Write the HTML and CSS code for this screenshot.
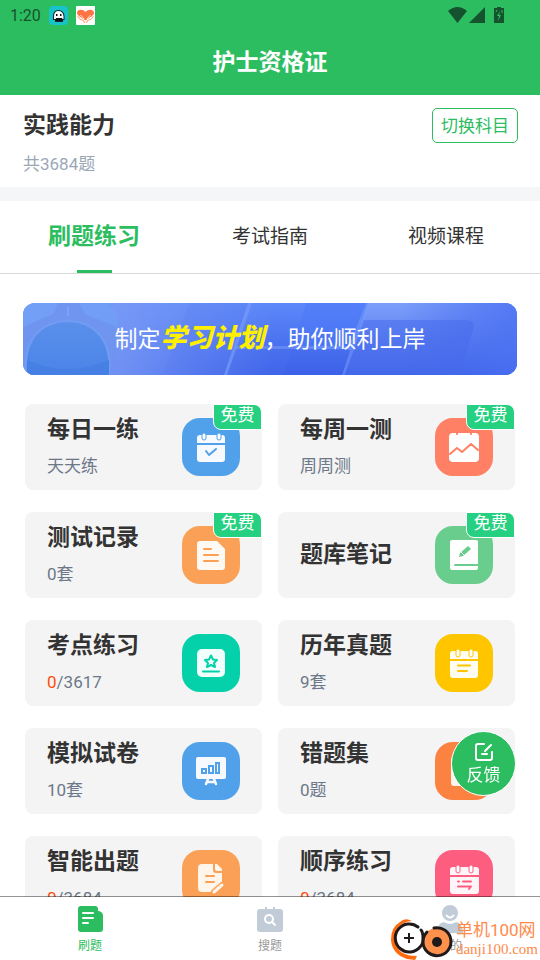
FILE: index.html
```html
<!DOCTYPE html>
<html lang="zh-CN">
<head>
<meta charset="utf-8">
<meta name="viewport" content="width=device-width, initial-scale=1">
<title>护士资格证</title>
<link rel="stylesheet" href="styles.css">
</head>
<body>
<header class="top">
  <div class="status">
    <span>1:20</span>
    <svg class="app" viewBox="0 0 19 19" aria-hidden="true"><rect width="19" height="19" rx="4" fill="#15c3c8"/><path d="M4 14V10.500Q4 4 9.500 4T15.500 10.500V14H14V16H6V14Z" fill="#0d2a2d"/><path d="M5 13V10.500Q5 5 9.500 5T14.500 10.500V13Z" fill="#fff"/><path d="M7 12h6l1 3H6zM7 8h1.500v2H7zM11 8h1.500v2H11z" fill="#111"/></svg>
    <svg class="app heart" viewBox="0 0 19 19" aria-hidden="true"><rect width="19" height="19" rx="1" fill="#fff"/><path d="M9.500 14.500C5 11 1 9.500 1 7C1 3 7 3 9.500 6C12 3 18 3 18 7C18 9.500 14 11 9.500 14.500Z" fill="#ff7444"/><path d="M1.500 10Q3 14 7.500 14.500L8.500 17M17.500 10Q16 14 11.500 14.500L10.500 17" fill="none" stroke="#ff9a62"/><path d="M4.500 9L8 13M14.500 9L11 13" fill="none" stroke="#ffe0c8"/></svg>
    <svg class="signals" viewBox="0 0 58 19" aria-hidden="true"><g fill="#14532d"><path d="M0 5Q9.500-3 19 5L9.500 17Z"/><path d="M37 1V17H21Z"/><path d="M49 1h4v1h3v15H46V2h3z"/></g><path d="M52 5l-3 5h2l-1 5 3-6h-2z" fill="#2dbd61"/><path d="M48 6l1-2M54 4v3" stroke="#2dbd61"/></svg>
  </div>
  <h1>护士资格证</h1>
</header>
<main>
  <section class="subject">
    <div><h2>实践能力</h2><p>共3684题</p></div>
    <button class="switch" type="button">切换科目</button>
  </section>
  <div class="tabs">
    <button class="tab active" type="button">刷题练习</button>
    <button class="tab" type="button">考试指南</button>
    <button class="tab" type="button">视频课程</button>
  </div>
  <a class="banner" href="#plan">
    <svg class="art" viewBox="0 0 494 72" preserveAspectRatio="none" aria-hidden="true">
      <defs>
        <linearGradient id="base" x1="0" y1="0" x2="0" y2="1"><stop offset="0" stop-color="#5d88f9"/><stop offset="1" stop-color="#3c60e8"/></linearGradient>
        <linearGradient id="left" x1="0" y1="0" x2="1" y2="0"><stop offset="0" stop-color="#7b9cf6"/><stop offset=".4" stop-color="#7b9cf6" stop-opacity=".8"/><stop offset="1" stop-color="#7b9cf6" stop-opacity="0"/></linearGradient>
        <linearGradient id="lens" x1="0" y1="0" x2="0" y2="1"><stop offset="0" stop-color="#5a90eb"/><stop offset="1" stop-color="#4b84e8"/></linearGradient>
        <linearGradient id="pane" x1="0" y1="0" x2="0" y2="1"><stop offset="0" stop-color="#7c9ffb"/><stop offset="1" stop-color="#4266e9"/></linearGradient>
        <linearGradient id="edge" x1="0" y1="0" x2="1" y2="0"><stop offset="0" stop-color="#3c60e8" stop-opacity="0"/><stop offset="1" stop-color="#4a70f3" stop-opacity=".8"/></linearGradient>
      </defs>
      <rect width="494" height="72" fill="url(#base)"/>
      <rect width="250" height="72" fill="url(#left)"/>
      <path d="M0 0H80Q96 4 95 22L86 72H0Z" fill="#6fa2f7" opacity=".6"/>
      <path d="M0 24L30 11 35 0H56L62 11 94 24V44L88 72H0Z" fill="#6f91ee" opacity=".7"/>
      <path d="M3 72Q0 32 28 21Q44 15 62 21Q90 34 86 72Z" fill="url(#lens)" stroke="#719cf3" stroke-width="2"/>
      <path d="M4 57Q44 75 86 57V72H4Z" fill="#4680e5"/>
      <path d="M45 4V13" stroke="#8baefb"/>
      <path d="M166 0H226L210 47H270L260 72H140Z" fill="#557af0" opacity=".2"/>
      <path d="M225 0H229L212 49 204 72H201Z" fill="#769bfb" opacity=".7"/>
      <path d="M283 0H345L327 47H270Z" fill="#4a78fa" opacity=".5"/>
      <path d="M345 0H494V72H323Z" fill="url(#pane)"/>
      <rect x="380" width="114" height="72" fill="url(#edge)"/>
      <path d="M340 17H443Q454 17 449 30L436 72H323Z" fill="#4569eb" opacity=".5"/>
      <path d="M343 0H347L322 72H319L327 48Q326 46 320 46H212V43H326Z" fill="#7ca0fb" opacity=".5"/>
    </svg>
    <span class="slogan">制定<em>学习计划</em>，助你顺利上岸</span>
  </a>
  <div class="grid">
    <a class="card" href="#daily"><div><h3>每日一练</h3><p>天天练</p></div><span class="badge">免费</span>
      <svg class="tile blue" viewBox="0 0 58 58" aria-hidden="true"><path d="M15 25V20Q15 17 18 17H40Q43 17 43 20V25ZM15 27H43V41Q43 44 40 44H18Q15 44 15 41Z" fill="#f6faff"/><g class="ring"><rect x="20" y="15" width="4" height="7" rx="2"/><rect x="35" y="15" width="4" height="7" rx="2"/></g><path class="cut" d="M24 33L27 37 34 31"/></svg></a>
    <a class="card" href="#weekly"><div><h3>每周一测</h3><p>周周测</p></div><span class="badge">免费</span>
      <svg class="tile coral" viewBox="0 0 58 58" aria-hidden="true"><rect x="14" y="15" width="30" height="29" rx="4" fill="#fff"/><path class="cut" d="M22 14V16M36 14V16M15 36L22 30 27 34 36 26 43 32"/></svg></a>
    <a class="card" href="#records"><div><h3>测试记录</h3><p>0套</p></div><span class="badge">免费</span>
      <svg class="tile orange" viewBox="0 0 58 58" aria-hidden="true"><path d="M18 15H35L43 23V41Q43 44 40 44H18Q15 44 15 41V18Q15 15 18 15Z" fill="#fff9f3"/><path class="cut" d="M22 23H29M22 29H36M22 35H36"/></svg></a>
    <a class="card" href="#notes"><div><h3>题库笔记</h3></div><span class="badge">免费</span>
      <svg class="tile green" viewBox="0 0 58 58" aria-hidden="true"><rect x="15" y="14" width="28" height="30" rx="2" fill="#fff"/><path class="cut" d="M20 39H44"/><path class="fill" d="M24 31L25 27 33 20 36 23 28 30Z"/><path d="M26 26L29 29" stroke="#fff"/></svg></a>
    <a class="card" href="#points"><div><h3>考点练习</h3><p><b>0</b>/3617</p></div>
      <svg class="tile teal" viewBox="0 0 58 58" aria-hidden="true"><rect x="15" y="15" width="28" height="28" rx="5" fill="#f0fffb"/><path class="cut" d="M29 21.500L31 25.500 35 26 32 29 33 33 29 31 25 33 26 29 23 26 27 25.500ZM21 37.500H37"/></svg></a>
    <a class="card" href="#past"><div><h3>历年真题</h3><p>9套</p></div>
      <svg class="tile yellow" viewBox="0 0 58 58" aria-hidden="true"><path d="M15 25V20Q15 17 18 17H40Q43 17 43 20V25ZM15 27H43V41Q43 44 40 44H18Q15 44 15 41Z" fill="#fffdf0"/><g class="ring"><rect x="21" y="15" width="4" height="8" rx="2"/><rect x="34" y="15" width="4" height="8" rx="2"/></g><path class="cut" d="M23 31.500H35M23 37H32"/></svg></a>
    <a class="card" href="#mock"><div><h3>模拟试卷</h3><p>10套</p></div>
      <svg class="tile blue" viewBox="0 0 58 58" aria-hidden="true"><rect x="14" y="15" width="30" height="22" rx="2" fill="#f6faff"/><path d="M26 37L24 42M32 37L34 42M25 40H33" fill="none" stroke="#f6faff" stroke-width="2.500" stroke-linecap="round"/><path class="cut thin" d="M20 27H24V31H20ZM27 24H31V31H27ZM34 21H37V31H34Z"/></svg></a>
    <a class="card" href="#wrong"><div><h3>错题集</h3><p>0题</p></div>
      <svg class="tile deep" viewBox="0 0 58 58" aria-hidden="true"><rect x="16" y="15" width="27" height="29" rx="3" fill="#fff4ed"/><path class="cut" d="M24 25L33 34M33 25L24 34"/></svg></a>
    <a class="card" href="#smart"><div><h3>智能出题</h3><p><b>0</b>/3684</p></div>
      <svg class="tile orange" viewBox="0 0 58 58" aria-hidden="true"><path d="M20 14H31V20Q31 23 34 23H40V34L31 42H20Q16 42 16 38V18Q16 14 20 14ZM33 14H35L40 19V21H35Q33 21 33 19Z" fill="#fff5eb"/><path class="cut" d="M24 26H32M24 32H32"/><path d="M32 42L40 35" stroke="#fba157" stroke-width="6" stroke-linecap="round"/><path d="M32 42L40 35" stroke="#fff5eb" stroke-width="3" stroke-linecap="round"/></svg></a>
    <a class="card" href="#sequence"><div><h3>顺序练习</h3><p><b>0</b>/3684</p></div>
      <svg class="tile pink" viewBox="0 0 58 58" aria-hidden="true"><path d="M15 25V20Q15 17 18 17H41Q44 17 44 20V25ZM15 27H44V41Q44 44 41 44H18Q15 44 15 41Z" fill="#fff5f8"/><g class="ring"><rect x="21" y="15" width="4" height="8" rx="2"/><rect x="34" y="15" width="4" height="8" rx="2"/></g><path class="cut" d="M23 31.500H24M28 31.500H36M23 36.500H36L34 39"/></svg></a>
  </div>
</main>
<button class="feedback" type="button">
  <svg viewBox="0 0 20 20" aria-hidden="true"><path d="M10 2H4Q2 2 2 4V16Q2 18 4 18H16Q18 18 18 16V10M17 3L11 9M8 12H13" fill="none" stroke="#fff" stroke-width="2" stroke-linecap="round"/></svg>
  反馈
</button>
<nav>
  <a class="on" href="#practice"><svg viewBox="0 0 26 28" aria-hidden="true"><path d="M4 1H18Q21 1 21 4V6H22Q26 7 26 11V24Q26 27 23 27H4Q1 27 1 24V4Q1 1 4 1Z" fill="#2dbd61"/><path d="M6 8H16M6 13H16M6 18H11" stroke="#fff" stroke-width="2" stroke-linecap="round"/></svg>刷题</a>
  <a href="#search"><svg viewBox="0 0 26 28" aria-hidden="true"><path d="M3 4H8V2H10V4H16V2H18V4H23Q26 4 26 7V24Q26 27 23 27H3Q0 27 0 24V7Q0 4 3 4Z" fill="#c2cbd8"/><circle cx="12" cy="14" r="4" fill="none" stroke="#fff" stroke-width="2"/><path d="M15 17L18 20" stroke="#fff" stroke-width="2" stroke-linecap="round"/></svg>搜题</a>
  <a href="#mine"><svg viewBox="0 0 26 28" aria-hidden="true"><circle cx="13" cy="8" r="8" fill="#c2cbd8"/><path d="M9 10Q13 15 17 10" fill="none" stroke="#fff" stroke-width="2"/><path d="M0 28Q0 18 7 17Q13 21 19 17Q26 18 26 28Z" fill="#c2cbd8"/></svg>我的</a>
  <div class="mark">
    <svg viewBox="0 0 64 42" aria-hidden="true"><path d="M22 3Q15-1 10 4Q1 9 1 22Q2 36 17 41L25 42 27 38Q8 38 5 24Q4 10 12 6Q17 3 22 3Z" fill="#ff6a0c"/><circle cx="19" cy="20" r="14" fill="#fff"/><path d="M28 9A14 14 0 1 0 30 29Q34 25 33 20Q33 14 31 12" fill="none" stroke="#211a1a" stroke-width="3" stroke-linecap="round"/><path d="M19 15V25M14 20H24" stroke="#211a1a" stroke-width="2"/><circle cx="47" cy="24" r="14" fill="#ff914d"/><path d="M44 10A14 14 0 1 1 33 24Q33 18 37 14" fill="none" stroke="#211a1a" stroke-width="3" stroke-linecap="round"/><circle cx="47" cy="24" r="5" fill="#211a1a"/></svg>
    <p>单机100网<small>danji100.com</small></p>
  </div>
</nav>
</body>
</html>
```
FILE: styles.css
```css
* { box-sizing: border-box; }

body {
  margin: 0;
  height: 100vh;
  display: flex;
  flex-direction: column;
  background: #fff;
  color: #333;
  font-family: Roboto, "Noto Sans CJK SC", sans-serif;
  font-size: 17px;
  line-height: 24px;
}

h1, h2, h3, p { margin: 0; }
h1, h2, h3 { font-size: 23px; line-height: 34px; font-weight: 700; }
a { color: inherit; text-decoration: none; }
button { font: inherit; border: 0; padding: 0; background: none; color: inherit; }
svg { display: block; }

.top { background: #2dbd61; padding-bottom: 15px; flex: none; }
.top h1 { color: #fff; text-align: center; }
.status {
  display: flex;
  align-items: center;
  gap: 8px;
  height: 46px;
  padding: 0 34px 15px 10px;
  font-size: 16px;
  color: #14532d;
}
.app { width: 19px; height: 19px; }
.signals { width: 58px; height: 19px; margin-left: auto; }

main { flex: 1; min-height: 0; overflow-y: auto; scrollbar-width: none; }

.subject {
  display: flex;
  justify-content: space-between;
  align-items: flex-start;
  padding: 13px 22px 11px 23px;
  border-bottom: 14px solid #f5f6f8;
}
.subject h2 { line-height: 36px; }
.subject p { margin-top: 8px; color: #9ba7b7; }
.switch {
  height: 35px;
  padding: 0 8px;
  border: 1px solid #2dbd61;
  border-radius: 5px;
  color: #2dbd61;
}

.tabs { display: flex; height: 73px; padding: 0 6px; border-bottom: 1px solid #d8d8d8; }
.tab {
  flex: 1;
  display: flex;
  flex-direction: column;
  align-items: center;
  padding-top: 19px;
  font-size: 19px;
  line-height: 34px;
}
.tab.active { color: #2dbd61; font-size: 23px; font-weight: 700; }
.tab.active::after { content: ""; width: 35px; height: 3px; margin-top: auto; background: #2dbd61; }

.banner {
  position: relative;
  display: flex;
  align-items: center;
  justify-content: center;
  height: 72px;
  margin: 29px 23px;
  border-radius: 12px;
  overflow: hidden;
}
.art { position: absolute; inset: 0; width: 100%; height: 100%; }
.slogan { position: relative; color: #fff; font-size: 23px; line-height: 34px; white-space: nowrap; }
.slogan em { color: #fff000; font-size: 26px; font-weight: 900; }

.grid {
  display: grid;
  grid-template-columns: 1fr 1fr;
  gap: 22px 16px;
  padding: 0 25px 22px;
}
.card {
  position: relative;
  display: flex;
  align-items: center;
  justify-content: space-between;
  height: 86px;
  padding: 0 22px;
  border-radius: 8px;
  background: #f4f4f4;
}
.card p { margin-top: 7px; padding-bottom: 3px; color: #6c7889; }
.card b { color: #ff4d0a; font-weight: 400; }
.badge {
  position: absolute;
  top: 0;
  right: 0;
  width: 49px;
  height: 26px;
  border: 1px solid #fff;
  border-radius: 0 8px 0 8px;
  background: #25d080;
  color: #fff;
  text-align: center;
  line-height: 21px;
}

.tile { width: 58px; height: 58px; border-radius: 18px; background: currentColor; }
.cut { fill: none; stroke: currentColor; stroke-width: 2; stroke-linecap: round; stroke-linejoin: round; }
.thin { stroke-linejoin: miter; }
.fill { fill: currentColor; }
.ring { fill: #fff; stroke: currentColor; stroke-width: 1; }
.blue { color: #50a1ea; }
.coral { color: #ff8064; }
.orange { color: #fba157; }
.green { color: #69ce8d; }
.teal { color: #04d1aa; }
.yellow { color: #ffc600; }
.deep { color: #fb8241; }
.pink { color: #fd5e80; }

.feedback {
  position: fixed;
  right: 24px;
  bottom: 164px;
  width: 65px;
  height: 65px;
  display: flex;
  flex-direction: column;
  align-items: center;
  justify-content: center;
  gap: 1px;
  padding-top: 2px;
  border: 1px solid #fff;
  border-radius: 50%;
  background: #2dbd61;
  color: #fff;
}
.feedback svg { width: 20px; height: 20px; }

nav {
  position: relative;
  flex: none;
  display: flex;
  height: 63px;
  background: #fff;
  box-shadow: 0 -1px 0 rgba(0, 0, 0, 0.42);
}
nav a {
  flex: 1;
  display: flex;
  flex-direction: column;
  align-items: center;
  gap: 1px;
  padding-top: 8px;
  color: #999;
  font-size: 12px;
}
nav a svg { width: 26px; height: 28px; }
nav .on { color: #2dbd61; }

.mark {
  position: absolute;
  right: 2px;
  bottom: 0;
  display: flex;
  align-items: center;
  gap: 2px;
  color: #ff8a4a;
}
.mark svg { width: 64px; height: 42px; }
.mark p { font-size: 17px; line-height: 20px; }
.mark small { display: block; font-family: "Liberation Serif", serif; font-size: 15px; line-height: 18px; }
```
